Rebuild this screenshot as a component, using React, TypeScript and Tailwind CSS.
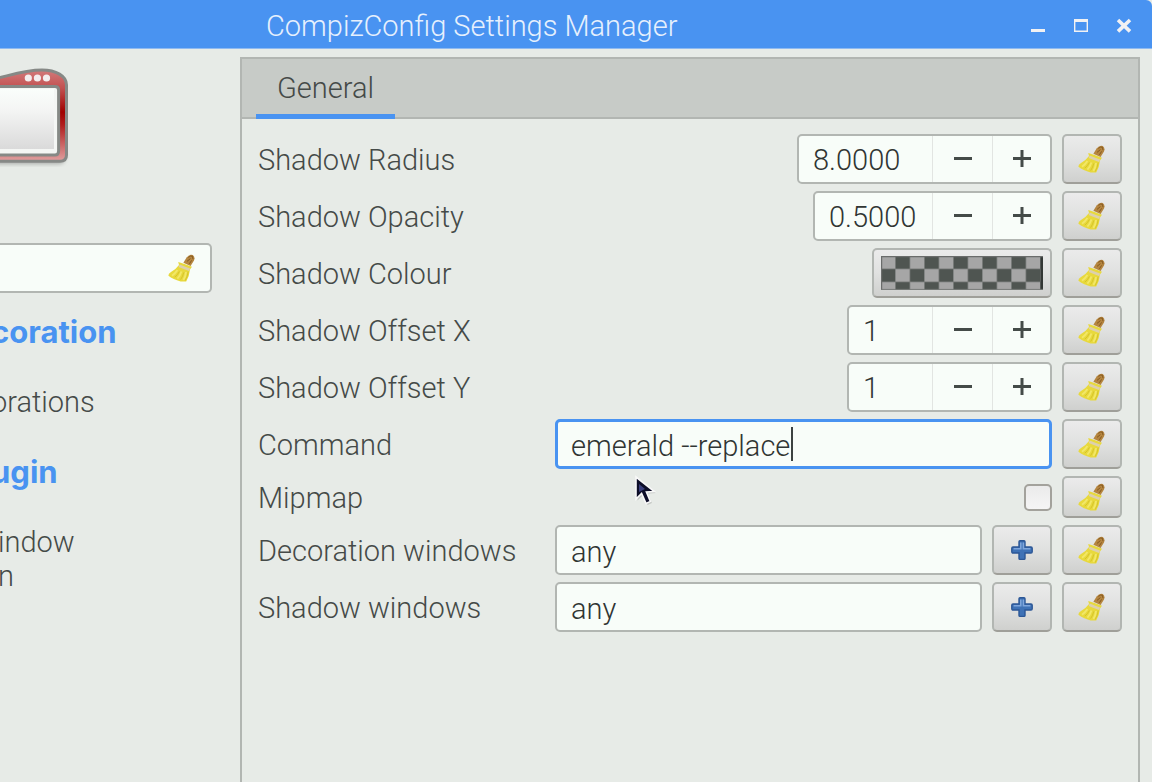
import React, { useState } from "react";

const frame = "border-2 border-[#b2b6b2] rounded-[5px] bg-[#f8fdf9]";
const raised =
  "flex items-center justify-center shrink-0 border-2 border-[#b2b6b2] border-b-[#9f9f99] rounded-[5px] bg-gradient-to-b from-[#ebebeb] via-[#e0e1e0] to-[#cfd0ce]";
const caption = "pt-[2px]";
const groupTitle = "text-[31px] font-bold font-['Inter',sans-serif] text-[#4993f1]";

function Broom() {
  return (
    <svg width="28" height="28" viewBox="0 0 28 28" aria-hidden="true">
      <path d="M15.4 8.8 L18.6 3.4 Q21.6 -0.2 24.8 1 Q27.4 3 26 6.4 L22.6 12 Z" fill="#b5853f" />
      <path d="M20.4 3.4 Q22.4 1.4 24.4 2.2 L25 5.2 M19 7.4 L22.4 4.6 M21.4 9.8 L23.6 6.4" stroke="#855a22" strokeWidth="1" fill="none" />
      <path
        d="M10.2 8 Q16 9.6 24 12.8 L22 15.4 Q21.4 22 18.2 27.4 L12.6 27.4 Q5 25.6 0.4 21.8 Q0.2 19.4 3 18 Q8 15.2 11 11 Z"
        fill="#e8d93c"
      />
      <path d="M9.4 16 Q7.4 19.4 4 21.8 M13.4 17.4 Q12 22 9.4 24.6 M18 18 Q17.6 22.6 15.4 26" stroke="#f2e768" strokeWidth="1.8" fill="none" />
      <path d="M11.4 17.4 Q9.8 20.8 6.8 23.2 M15.8 18.4 Q14.8 22.6 12.6 25.6 M20.2 17.6 Q19.6 22.6 17.2 26.6" stroke="#d6c42a" strokeWidth="1" fill="none" />
      <path d="M11.2 11.8 Q16 13.8 21.6 15.8" stroke="#ddd0ae" strokeWidth="2.6" fill="none" />
    </svg>
  );
}

function BlueCross() {
  return (
    <svg width="24" height="24" viewBox="0 0 24 24" aria-hidden="true">
      <path
        d="M10 2.8 h4 a1 1 0 0 1 1 1 V9 h6 a1.2 1.2 0 0 1 1.2 1.2 v3.6 a1.2 1.2 0 0 1 -1.2 1.2 h-6 v5.4 a1 1 0 0 1 -1 1 h-4 a1 1 0 0 1 -1 -1 V15 H3 a1.2 1.2 0 0 1 -1.2 -1.2 v-3.6 A1.2 1.2 0 0 1 3 9 h6 V3.8 a1 1 0 0 1 1 -1 Z"
        fill="#3f72b6"
        stroke="#2c5796"
        strokeWidth="1.4"
      />
      <path d="M10.8 4.6 V10.8 H3.6 M13.4 4.6 V10.8 H20.4" stroke="#7fa6dc" strokeWidth="1.6" fill="none" />
    </svg>
  );
}

function Reset({ name, short = false }: { name: string; short?: boolean }) {
  return (
    <button type="button" aria-label={`Reset ${name}`} className={`${raised} w-[60px] ${short ? "h-[42px]" : "h-[50px]"}`}>
      <Broom />
    </button>
  );
}

function Spin({ id, name, initial, step, digits, width }: { id: string; name: string; initial: number; step: number; digits: number; width: string }) {
  const [value, setValue] = useState(initial.toFixed(digits));
  const change = (by: number) => setValue((v) => ((parseFloat(v) || 0) + by).toFixed(digits));
  return (
    <div className="flex flex-1 items-center gap-[10px]">
      <label htmlFor={id} className={`flex-1 ${caption}`}>{name}</label>
      <div className={`flex h-[50px] overflow-hidden ${frame}`}>
        <input
          id={id}
          inputMode="decimal"
          value={value}
          onChange={(e) => setValue(e.target.value)}
          className={`bg-transparent pt-[2px] pl-[14px] text-[#303533] outline-none ${width}`}
        />
        <button type="button" aria-label={`Decrease ${name}`} onClick={() => change(-step)} className="flex w-[60px] items-center justify-center border-l border-[#e2e5e2]">
          <svg width="20" height="20" viewBox="0 0 20 20"><path d="M1 9.5 H19" stroke="#444b48" strokeWidth="3" /></svg>
        </button>
        <button type="button" aria-label={`Increase ${name}`} onClick={() => change(step)} className="flex w-[58px] items-center justify-center border-l border-[#e2e5e2]">
          <svg width="20" height="20" viewBox="0 0 20 20"><path d="M1 9.5 H19 M10 1 V18" stroke="#444b48" strokeWidth="3" /></svg>
        </button>
      </div>
      <Reset name={name} />
    </div>
  );
}

function MatchRow({ id, name }: { id: string; name: string }) {
  return (
    <div className="flex items-center gap-[10px]">
      <label htmlFor={id} className={`w-[287px] shrink-0 ${caption}`}>{name}</label>
      <input id={id} defaultValue="any" className={`h-[50px] min-w-0 flex-1 px-[14px] pt-1 text-[#303533] outline-none ${frame}`} />
      <button type="button" aria-label={`Edit ${name}`} className={`${raised} h-[50px] w-[60px]`}><BlueCross /></button>
      <Reset name={name} />
    </div>
  );
}

function Swatch() {
  const cells = [];
  for (let r = 0; r < 3; r++)
    for (let c = 0; c < 12; c++)
      cells.push(
        <rect key={`${r}-${c}`} x={c * 14.5} y={r * 13} width="14.5" height="13" fill={(r + c) % 2 ? "#4f5551" : "#a6a6a6"} stroke="#7b7e7c" strokeWidth="0.6" />
      );
  return (
    <svg width="162" height="34" viewBox="0 0 162 34" aria-hidden="true">
      {cells}
      <rect x="159.5" width="3" height="34" fill="#333735" />
      <path d="M0.5 34 V0.5 H162" stroke="#6a6c6b" strokeWidth="1.4" fill="none" />
      <path d="M0 33.4 H162" stroke="#777a78" strokeWidth="1" />
    </svg>
  );
}

function WindowArt() {
  return (
    <svg width="76" height="104" viewBox="0 0 76 104" className="block" aria-hidden="true">
      <defs>
        <linearGradient id="red" x1="0" y1="0" x2="0" y2="1">
          <stop offset="0" stopColor="#d27a7a" />
          <stop offset="0.2" stopColor="#c25050" />
          <stop offset="0.46" stopColor="#a00000" />
          <stop offset="0.6" stopColor="#b01c1c" />
          <stop offset="0.85" stopColor="#cf7070" />
          <stop offset="1" stopColor="#e0a0a0" />
        </linearGradient>
        <linearGradient id="pane" x1="0" y1="0" x2="0" y2="1">
          <stop offset="0" stopColor="#fafefb" />
          <stop offset="0.35" stopColor="#f4f5f4" />
          <stop offset="1" stopColor="#dadada" />
        </linearGradient>
        <filter id="soft" x="-20%" y="-20%" width="140%" height="140%"><feGaussianBlur stdDeviation="2" /></filter>
      </defs>
      <path d="M-10 90 H58 Q64 90 65 86 V94 Q64 99 58 99 H-10 Z" fill="#a8aba8" filter="url(#soft)" />
      <path d="M-10 15 C12 10 24 5 42 5 C56 5 66.5 11 66.5 20 V90 Q66.5 96.3 60 96.3 H-10 Z" fill="url(#red)" stroke="#868986" strokeWidth="3" />
      <path d="M-10 21.5 H55 Q58.6 21.5 58.6 25 V86 Q58.6 90 55 90 H-10 Z" fill="#f4f6f4" stroke="#868986" strokeWidth="3" />
      <rect x="-10" y="24" width="64" height="60" fill="url(#pane)" />
      <circle cx="28.3" cy="13" r="3.6" fill="#f3eeee" />
      <circle cx="37.4" cy="13" r="3.6" fill="#f3eeee" />
      <circle cx="46.5" cy="13" r="3.6" fill="#f3eeee" />
    </svg>
  );
}

export default function App() {
  const [filter, setFilter] = useState("");
  return (
    <div className="flex min-h-screen flex-col bg-[#e7ebe7] font-['Roboto',sans-serif] text-[29px] leading-[34px] font-light text-[#454a48]">
      <header className="flex h-[49px] items-center rounded-tr-[6px] border-b border-[#8fbaf1] bg-[#4993f1] pt-1 pr-[14px] text-[#e6f0fd]">
        <h1 className="flex-1 pl-[266px]">CompizConfig Settings Manager</h1>
        <div className="flex gap-[15px]">
          <button type="button" aria-label="Minimize" className="flex h-7 w-7 items-center justify-center">
            <svg width="16" height="16" viewBox="0 0 16 16"><path d="M1 12.5 H15" stroke="#f1f1f3" strokeWidth="3" /></svg>
          </button>
          <button type="button" aria-label="Maximize" className="flex h-7 w-7 items-center justify-center">
            <svg width="16" height="16" viewBox="0 0 16 16"><path d="M1.7 2 V13.2 H14.3 V2" stroke="#f1f1f3" strokeWidth="1.4" fill="none" /><path d="M1 2.5 H15" stroke="#f1f1f3" strokeWidth="3" /></svg>
          </button>
          <button type="button" aria-label="Close" className="flex h-7 w-7 items-center justify-center">
            <svg width="16" height="16" viewBox="0 0 16 16"><path d="M2 2 L14 13.4 M14 2 L2 13.4" stroke="#f1f1f3" strokeWidth="3.6" /></svg>
          </button>
        </div>
      </header>

      <main className="flex flex-1 pt-2 pr-3">
        <aside className="w-[240px] shrink-0 overflow-hidden pt-2">
          <WindowArt />
          <div className="mt-[74px] mr-7 flex h-[50px] items-center rounded-r-[5px] border-2 border-l-0 border-[#b2b6b2] bg-[#f8fdf9] pr-[14px]">
            <input aria-label="Filter" value={filter} onChange={(e) => setFilter(e.target.value)} className="min-w-0 flex-1 bg-transparent outline-none" />
            <button type="button" aria-label="Clear filter" onClick={() => setFilter("")}><Broom /></button>
          </div>
          <div className="-ml-[9px] whitespace-nowrap">
            <h2 className={`mt-[22px] ${groupTitle}`}>coration</h2>
            <p className="mt-9">orations</p>
            <h2 className={`mt-9 ${groupTitle}`}>ugin</h2>
            <div className="mt-9 pl-[7px]">
              <p>indow</p>
              <p>n</p>
            </div>
          </div>
        </aside>

        <section className="flex-1 border-2 border-b-0 border-[#b2b6b2]">
          <div role="tablist" className="flex h-[60px] border-b-2 border-[#b2b6b2] bg-[#c7cbc7] pl-[14px]">
            <button type="button" role="tab" aria-selected="true" className="-mb-[2px] border-b-[5px] border-[#4993f1] px-[21px] pt-[2px]">General</button>
          </div>
          <div className="flex flex-col gap-[7px] px-4 pt-[15px]">
            <Spin id="radius" name="Shadow Radius" initial={8} step={0.1} digits={4} width="w-[133px]" />
            <Spin id="opacity" name="Shadow Opacity" initial={0.5} step={0.01} digits={4} width="w-[117px]" />
            <div className="flex items-center gap-[10px]">
              <label htmlFor="colour" className={`flex-1 ${caption}`}>Shadow Colour</label>
              <button id="colour" type="button" className={`${raised} h-[50px] w-[180px]`}><Swatch /></button>
              <Reset name="Shadow Colour" />
            </div>
            <Spin id="offset-x" name="Shadow Offset X" initial={1} step={1} digits={0} width="w-[83px]" />
            <Spin id="offset-y" name="Shadow Offset Y" initial={1} step={1} digits={0} width="w-[83px]" />
            <div className="flex items-center gap-[10px]">
              <label htmlFor="command" className={`w-[287px] shrink-0 ${caption}`}>Command</label>
              <div className="relative flex min-w-0 flex-1">
                <input
                  id="command"
                  defaultValue="emerald --replace"
                  className="h-[50px] w-full rounded-[5px] border-[3px] border-[#4993f1] bg-[#f8fdf9] px-[13px] pt-1 text-[#303533] outline-none"
                />
                <span className="pointer-events-none absolute top-2 left-[236px] h-[34px] w-[2px] bg-[#3c4241]" />
                <svg className="pointer-events-none absolute top-[55px] left-[78px]" width="26" height="34" viewBox="0 0 26 34" aria-hidden="true">
                  <path d="M3 3 V25 L8.6 19.4 L13 29.4 L17.4 27.4 L13.4 18 L21.4 17.6 Z" fill="#9fa2a0" opacity="0.5" transform="translate(1.5 1.5)" />
                  <path d="M3 3 V25 L8.6 19.4 L13 29.4 L17.4 27.4 L13.4 18 L21.4 17.6 Z" fill="#0d0e28" stroke="#f8f8f8" strokeWidth="1.6" />
                  <path d="M6 10 V18 L12 15 Z" fill="#3a3f7c" />
                </svg>
              </div>
              <Reset name="Command" />
            </div>
            <div className="flex items-center gap-[10px]">
              <label htmlFor="mipmap" className={`flex-1 ${caption}`}>Mipmap</label>
              <input
                id="mipmap"
                type="checkbox"
                className="h-[27px] w-7 appearance-none rounded-[5px] border-2 border-[#a3a29c] bg-gradient-to-b from-[#ebebeb] to-[#f5f5f5] checked:from-[#4993f1] checked:to-[#4993f1]"
              />
              <Reset name="Mipmap" short />
            </div>
            <MatchRow id="decoration-windows" name="Decoration windows" />
            <MatchRow id="shadow-windows" name="Shadow windows" />
          </div>
        </section>
      </main>
    </div>
  );
}
